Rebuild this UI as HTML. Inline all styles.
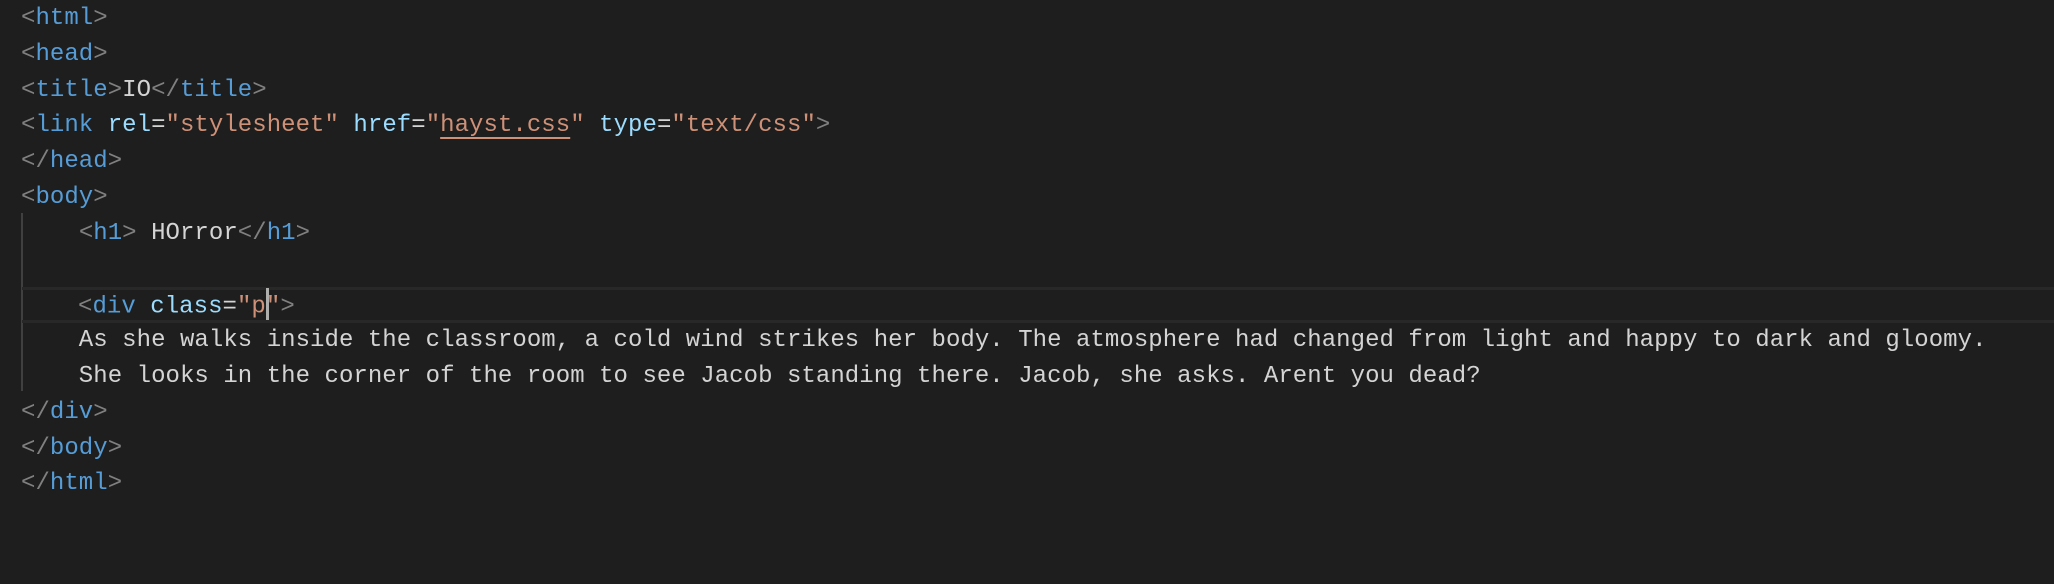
<!DOCTYPE html>
<html><head><style>
html,body{margin:0;padding:0;background:#1e1e1e;width:2054px;height:584px;overflow:hidden}
.ed{position:absolute;left:0;top:1px;width:2054px;font-family:"Liberation Mono",monospace;font-size:24px;line-height:35.8px;color:#d4d4d4;letter-spacing:0.05px}
.l{height:35.8px;white-space:pre;padding-left:21px;position:relative}
.b{color:#808080}.t{color:#569cd6}.a{color:#9cdcfe}.s{color:#ce9178}
.cur{border-top:3px solid #282828;border-bottom:3px solid #282828;box-sizing:border-box;margin-left:22px;padding-left:56px;line-height:29.8px}
.guide{position:absolute;left:21px;top:213px;width:2px;height:178px;background:#404040}
.caret{display:inline-block;width:3px;height:32px;background:#aeafad;vertical-align:middle;margin:0 -3px 0 0;position:relative;top:-2px}
.u{text-decoration:underline;text-decoration-color:#ce9178;text-underline-offset:6px;text-decoration-thickness:2px}
</style></head><body>
<div class="guide"></div>
<div class="ed">
<div class="l"><span class="b">&lt;</span><span class="t">html</span><span class="b">&gt;</span></div>
<div class="l"><span class="b">&lt;</span><span class="t">head</span><span class="b">&gt;</span></div>
<div class="l"><span class="b">&lt;</span><span class="t">title</span><span class="b">&gt;</span>IO<span class="b">&lt;/</span><span class="t">title</span><span class="b">&gt;</span></div>
<div class="l"><span class="b">&lt;</span><span class="t">link</span> <span class="a">rel</span>=<span class="s">"stylesheet"</span> <span class="a">href</span>=<span class="s">"<span class="u">hayst.css</span>"</span> <span class="a">type</span>=<span class="s">"text/css"</span><span class="b">&gt;</span></div>
<div class="l"><span class="b">&lt;/</span><span class="t">head</span><span class="b">&gt;</span></div>
<div class="l"><span class="b">&lt;</span><span class="t">body</span><span class="b">&gt;</span></div>
<div class="l">    <span class="b">&lt;</span><span class="t">h1</span><span class="b">&gt;</span> HOrror<span class="b">&lt;/</span><span class="t">h1</span><span class="b">&gt;</span></div>
<div class="l"> </div>
<div class="l cur"><span class="b">&lt;</span><span class="t">div</span> <span class="a">class</span>=<span class="s">"p</span><span class="caret"></span><span class="s">"</span><span class="b">&gt;</span></div>
<div class="l">    As she walks inside the classroom, a cold wind strikes her body. The atmosphere had changed from light and happy to dark and gloomy.</div>
<div class="l">    She looks in the corner of the room to see Jacob standing there. Jacob, she asks. Arent you dead?</div>
<div class="l"><span class="b">&lt;/</span><span class="t">div</span><span class="b">&gt;</span></div>
<div class="l"><span class="b">&lt;/</span><span class="t">body</span><span class="b">&gt;</span></div>
<div class="l"><span class="b">&lt;/</span><span class="t">html</span><span class="b">&gt;</span></div>
</div>
</body></html>
